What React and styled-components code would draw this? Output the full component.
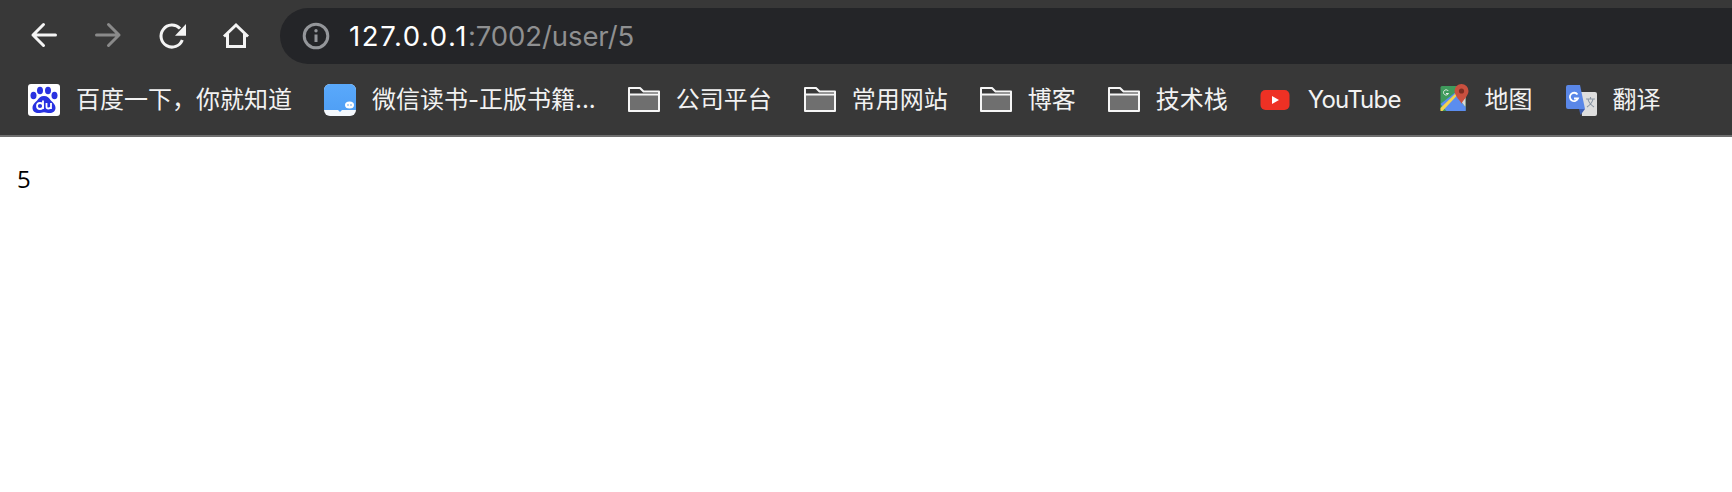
import React from "react";
import styled, { createGlobalStyle } from "styled-components";

const Global = createGlobalStyle`
  html, body { margin: 0; padding: 0; background: #fff; overflow: hidden; }
  body { font-family: Inter, "Noto Sans CJK SC", sans-serif; }
`;
const Chrome = styled.header`
  background: #383838;
  border-bottom: 2px solid #6e6e6e;
  height: 135px;
  box-sizing: content-box;
`;
const Toolbar = styled.div`
  display: flex;
  align-items: center;
  height: 72px;
  padding-left: 28px;
  box-sizing: border-box;
`;
const NavButton = styled.span`
  width: 32px;
  height: 32px;
  margin-right: 32px;
  display: flex;
  align-items: center;
  justify-content: center;
  color: ${(p) => (p.$dim ? "#8a8a8a" : "#f4f4f4")};
  &:last-of-type { margin-right: 28px; }
`;
const Omnibox = styled.div`
  flex: 1;
  height: 56px;
  background: #242528;
  border-radius: 28px 0 0 28px;
  display: flex;
  align-items: center;
  padding-left: 22px;
  gap: 19px;
`;
const Url = styled.div`
  font: 400 27.5px Inter, sans-serif;
  color: #8f9091;
  white-space: nowrap;
  letter-spacing: -0.1px;
`;
const Host = styled.span`
  color: #fff;
  letter-spacing: 1.6px;
`;
const Bookmarks = styled.nav`
  display: flex;
  align-items: center;
  height: 56px;
  padding: 0 0 0 28px;
  gap: 32px;
`;
const Bookmark = styled.a`
  display: flex;
  align-items: center;
  gap: 16px;
  padding-right: ${(p) => (p.$latin ? "4px" : "0")};
  color: #f2f2f2;
  font: 400 24px/32px Inter, "Noto Sans CJK SC", sans-serif;
  letter-spacing: ${(p) => (p.$latin ? "-0.8px" : "0")};
  white-space: nowrap;
`;
const Content = styled.main`
  padding: 26px 17px;
  font: 400 24px/32px "Open Sans", sans-serif;
  color: #000;
`;

const Back = () => (
  <svg width="32" height="32" viewBox="0 0 32 32" fill="none" stroke="currentColor" strokeWidth="3" strokeLinecap="round" strokeLinejoin="round">
    <path d="M27.500 15H5M15.500 4.500 5 15l10.500 10.500" />
  </svg>
);
const Forward = () => (
  <svg width="32" height="32" viewBox="0 0 32 32" fill="none" stroke="currentColor" strokeWidth="3" strokeLinecap="round" strokeLinejoin="round">
    <path d="M4.500 15H27M16.500 4.500 27 15 16.500 25.500" />
  </svg>
);
const Reload = () => (
  <svg width="32" height="32" viewBox="0 0 32 32" fill="none">
    <path d="M26.300 20A11 11 0 1 1 24 8.500" stroke="currentColor" strokeWidth="3" />
    <path d="M30 4v11.700H19z" fill="currentColor" />
  </svg>
);
const Home = () => (
  <svg width="32" height="32" viewBox="0 0 32 32" fill="none" stroke="currentColor" strokeWidth="3">
    <path d="M4 16.500 16 5l12 11.500" />
    <path d="M7.500 14v12.500h17V14" />
  </svg>
);
const Info = () => (
  <svg width="28" height="28" viewBox="0 0 28 28" fill="none">
    <circle cx="14" cy="14" r="11.800" stroke="#94969a" strokeWidth="3" />
    <path d="M14 12.500v7.500" stroke="#94969a" strokeWidth="3" />
    <circle cx="14" cy="8.800" r="1.700" fill="#94969a" />
  </svg>
);
const Baidu = () => (
  <svg width="32" height="32" viewBox="0 0 32 32">
    <rect width="32" height="32" rx="3" fill="#fff" />
    <g fill="#2932e1">
      <ellipse cx="5.500" cy="11.500" rx="3" ry="3.800" />
      <ellipse cx="12" cy="6.500" rx="3" ry="3.800" />
      <ellipse cx="20" cy="6.500" rx="3" ry="3.800" />
      <ellipse cx="26.500" cy="11.500" rx="3" ry="3.800" />
      <path d="M16 12c-3.500 0-5 2-6.500 4S4.500 20 4.500 24c0 3 2.500 5 6 5 2 0 3.500-.8 5.500-.8s3.500.8 5.500.8c3.500 0 6-2 6-5 0-4-3.500-6-5-8s-3-4-6.500-4z" />
    </g>
    <g fill="none" stroke="#fff" strokeWidth="1.800">
      <circle cx="12" cy="22" r="3" />
      <path d="M15 16.500V25M18.500 19v4c0 2 3.500 2 4.500 0v-4M23 19v6" />
    </g>
  </svg>
);
const WeRead = () => (
  <svg width="32" height="32" viewBox="0 0 32 32">
    <defs>
      <linearGradient id="wr" x1="0" y1="0" x2="0" y2="1">
        <stop offset="0" stopColor="#5aa9fb" />
        <stop offset="1" stopColor="#4f9ff5" />
      </linearGradient>
    </defs>
    <rect width="32" height="32" rx="6" fill="#f4f8fd" />
    <path d="M0 6a6 6 0 0 1 6-6h20a6 6 0 0 1 6 6v20H18l-2 2-2-2H0z" fill="url(#wr)" />
    <ellipse cx="25.500" cy="21" rx="4.500" ry="3.600" fill="#fff" />
    <circle cx="24" cy="21" r=".8" fill="#4f9ff5" />
    <circle cx="27" cy="21" r=".8" fill="#4f9ff5" />
  </svg>
);
const Folder = () => (
  <svg width="32" height="32" viewBox="0 0 32 32">
    <path d="M2 11h28v15H2z" fill="#6f6f6f" />
    <path d="M1 4h11l3.500 3.500H31V27H1z" fill="none" stroke="#f6f6f6" strokeWidth="2" strokeLinejoin="round" />
    <path d="M1 10.500h30" stroke="#f6f6f6" strokeWidth="2" />
  </svg>
);
const YouTubeIcon = () => (
  <svg width="32" height="32" viewBox="-0.500 -6 32 32">
    <rect width="29" height="20" rx="5" fill="#ee3124" />
    <path d="M11.500 6v8l7-4z" fill="#fff" />
  </svg>
);
const Maps = () => (
  <svg width="32" height="32" viewBox="-3.500 0 32 32">
    <rect y="2" width="25" height="25" rx="1.500" fill="#3f9a5c" />
    <path d="M0 20 14 9l11 14v4H6z" fill="#5b8def" />
    <path d="M14 9 25 23V9z" fill="#d8d8d8" />
    <path d="M0 24 15 9.500 17 11 2 27H0z" fill="#f5d34e" />
    <path d="M12 17l13 6v4H8z" fill="#5b8def" />
    <path d="M21 0a7 7 0 0 0-7 7c0 5 7 11 7 13 0-2 7-8 7-13a7 7 0 0 0-7-7z" fill="#c9503f" />
    <circle cx="21" cy="7" r="2.600" fill="#7d2d22" />
    <path d="M7.800 7A2.600 2.600 0 1 0 8 9.500H5.500" fill="none" stroke="#e8efe8" strokeWidth="1" />
  </svg>
);
const Translate = () => (
  <svg width="32" height="32" viewBox="-1 -1 32 32">
    <path d="M14 7h15a2 2 0 0 1 2 2v20a2 2 0 0 1-2 2H16z" fill="#dedede" />
    <path d="M2 0h12l5 24H2a2 2 0 0 1-2-2V2a2 2 0 0 1 2-2z" fill="#5a87e8" />
    <path d="M19 24l-4.500 6-1.500-6z" fill="#3c5cb0" />
    <path d="M11.500 9.500A4.200 4.200 0 1 0 12 13.500H8" fill="none" stroke="#fff" strokeWidth="1.800" />
    <path d="M20 14h9M24.500 12v2M22 14c.5 3 3 6 6 8M27 14c-.5 3-3 6-6 8" fill="none" stroke="#8b97a5" strokeWidth="1.100" />
  </svg>
);

const bookmarks = [
  [Baidu, "百度一下，你就知道"],
  [WeRead, "微信读书-正版书籍..."],
  [Folder, "公司平台"],
  [Folder, "常用网站"],
  [Folder, "博客"],
  [Folder, "技术栈"],
  [YouTubeIcon, "YouTube", true],
  [Maps, "地图"],
  [Translate, "翻译"],
];

export default function App() {
  return (
    <>
      <Global />
      <Chrome>
        <Toolbar>
          <NavButton><Back /></NavButton>
          <NavButton $dim><Forward /></NavButton>
          <NavButton><Reload /></NavButton>
          <NavButton><Home /></NavButton>
          <Omnibox>
            <Info />
            <Url><Host>127.0.0.1</Host>:7002/user/5</Url>
          </Omnibox>
        </Toolbar>
        <Bookmarks>
          {bookmarks.map(([Icon, label, latin]) => (
            <Bookmark key={label} $latin={latin}><Icon />{label}</Bookmark>
          ))}
        </Bookmarks>
      </Chrome>
      <Content>5</Content>
    </>
  );
}
